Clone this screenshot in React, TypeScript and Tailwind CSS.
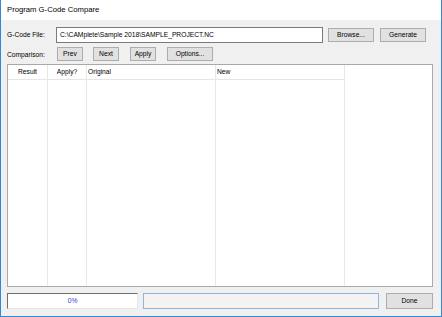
import React from 'react';

function Btn({ label, className = '' }: { label: string; className?: string }) {
  return (
    <div
      className={`flex items-center justify-center bg-[#e1e1e1] border border-[#adadad] ${className}`}
    >
      {label}
    </div>
  );
}

const columns = [
  { title: 'Result', width: 'w-[40px]', align: 'justify-center' },
  { title: 'Apply?', width: 'w-[39px]', align: 'justify-center' },
  { title: 'Original', width: 'w-[129px]', align: 'justify-start pl-[1px]' },
  { title: 'New', width: 'w-[129px]', align: 'justify-start pl-[1px]' },
];

export default function App() {
  return (
    <div className="w-[442px] h-[317px] flex flex-col border-x border-b border-[#3388d6] bg-[#f0f0f0] font-['Liberation_Sans',Arial,sans-serif] text-[6.7px] text-black leading-none">
      {/* title bar */}
      <div className="h-[20px] bg-white flex items-center pl-[6px] text-[7.7px]">
        Program G-Code Compare
      </div>

      <div className="flex-1 flex flex-col px-[6px]">
        {/* file row */}
        <div className="mt-[7px] h-[16px] flex items-center">
          <div className="w-[49px]">G-Code File:</div>
          <div className="w-[267px] h-[16px] bg-white border border-[#7a7a7a] flex items-center pl-[3px]">
            C:\CAMplete\Sample 2018\SAMPLE_PROJECT.NC
          </div>
          <Btn label="Browse..." className="ml-[5px] w-[46px] h-[14px]" />
          <Btn label="Generate" className="ml-[6px] w-[46px] h-[14px]" />
        </div>

        {/* comparison row */}
        <div className="mt-[4px] h-[14px] flex items-center">
          <div className="w-[50px] pt-[3px]">Comparison:</div>
          <Btn label="Prev" className="w-[26px] h-[14px]" />
          <Btn label="Next" className="ml-[10px] w-[26px] h-[14px]" />
          <Btn label="Apply" className="ml-[11px] w-[26px] h-[14px]" />
          <Btn label="Options..." className="ml-[11px] w-[46px] h-[14px]" />
        </div>

        {/* list */}
        <div className="mt-[3px] w-[426px] h-[223px] bg-white border border-[#a9a9a9] flex">
          {columns.map((c) => (
            <div key={c.title} className={`${c.width} h-full flex flex-col border-r border-[#e8e8e8]`}>
              <div className={`h-[15px] flex items-center ${c.align} border-b border-[#e5e5e5]`}>
                {c.title}
              </div>
            </div>
          ))}
        </div>

        {/* status row */}
        <div className="mt-[6px] h-[16px] flex items-stretch">
          <div className="w-[131px] bg-white border-t border-l border-[#6d6d6d] border-r-[#e6e6e6] border-b-[#e6e6e6] border-r border-b flex items-center justify-center text-[#3a3ad8]">
            0%
          </div>
          <div className="ml-[5px] w-[236px] bg-[#f3f3f3] border border-[#8fb6dd]" />
          <Btn label="Done" className="ml-[7px] w-[47px] border-[#3a8ad6]" />
        </div>
      </div>
    </div>
  );
}
